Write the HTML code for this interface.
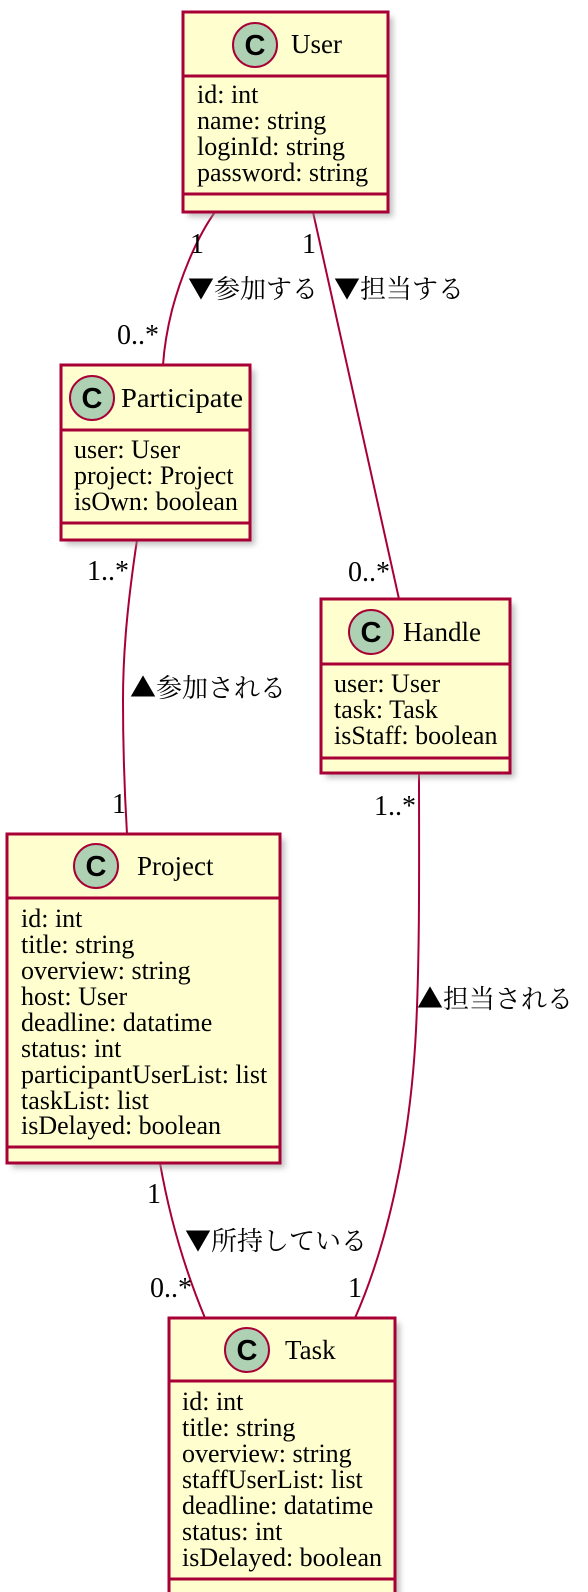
<!DOCTYPE html>
<html><head><meta charset="utf-8"><style>
html,body{margin:0;padding:0;background:#fff;width:588px;height:1592px;overflow:hidden}
svg{display:block}
.t{font-family:"Liberation Serif",serif;font-size:27px;fill:#000}
.a{font-family:"Liberation Serif",serif;font-size:26px;fill:#000}
.j{font-family:"Noto Serif CJK SC","Noto Sans CJK JP",serif;font-size:26px;fill:#000}
.m{font-family:"Liberation Serif",serif;font-size:28px;fill:#000}
.c{font-family:"Liberation Sans",sans-serif;font-weight:bold;font-size:29px;fill:#000}
.box{fill:#FEFECE;stroke:#A80036;stroke-width:3}
.dv{stroke:#A80036;stroke-width:3}
.ci{fill:#ADD1B2;stroke:#A80036;stroke-width:2}
.e{fill:none;stroke:#A80036;stroke-width:2}
</style></head><body>
<svg width="588" height="1592" viewBox="0 0 588 1592" xmlns="http://www.w3.org/2000/svg">
<defs><filter id="sh" x="-10%" y="-10%" width="130%" height="130%"><feGaussianBlur stdDeviation="3"/></filter></defs>

<path class="e" d="M215,212 C195,240 180,280 172,310 C167,330 164,350 163,365"/>
<path class="e" d="M313,212 L399,599"/>
<path class="e" d="M137,540 C128,600 123,650 123,700 C123,760 125,800 127,834"/>
<path class="e" d="M419,773 C419,850 420,950 416,1030 C410,1150 385,1250 355,1318"/>
<path class="e" d="M160,1163 C170,1220 185,1270 205,1318"/>

<text class="m" x="190" y="253">1</text>
<text class="m" x="117" y="344">0..*</text>
<text class="j" x="188" y="298">▼参加する</text>
<text class="m" x="302" y="253">1</text>
<text class="j" x="334" y="298">▼担当する</text>
<text class="m" x="348" y="581">0..*</text>
<text class="m" x="87" y="580">1..*</text>
<text class="j" x="130" y="697">▲参加される</text>
<text class="m" x="112" y="813">1</text>
<text class="m" x="374" y="815">1..*</text>
<text class="j" x="417" y="1008">▲担当される</text>
<text class="m" x="147" y="1203">1</text>
<text class="j" x="185" y="1250">▼所持している</text>
<text class="m" x="150" y="1297">0..*</text>
<text class="m" x="348" y="1297">1</text>

<!-- User -->
<rect x="188" y="17" width="205" height="200" fill="#999" opacity=".6" filter="url(#sh)"/>
<rect class="box" x="183" y="12" width="205" height="200"/>
<line class="dv" x1="183" y1="76" x2="388" y2="76"/>
<line class="dv" x1="183" y1="194" x2="388" y2="194"/>
<circle class="ci" cx="255" cy="45" r="22"/>
<text class="c" x="255" y="55" text-anchor="middle">C</text>
<text class="t" x="291" y="53">User</text>
<text class="a" x="197" y="103">id: int</text>
<text class="a" x="197" y="129">name: string</text>
<text class="a" x="197" y="155">loginId: string</text>
<text class="a" x="197" y="181">password: string</text>

<!-- Participate -->
<rect x="66" y="370" width="189" height="175" fill="#999" opacity=".6" filter="url(#sh)"/>
<rect class="box" x="61" y="365" width="189" height="175"/>
<line class="dv" x1="61" y1="430" x2="250" y2="430"/>
<line class="dv" x1="61" y1="523" x2="250" y2="523"/>
<circle class="ci" cx="92" cy="398" r="22"/>
<text class="c" x="92" y="408" text-anchor="middle">C</text>
<text class="t" x="121" y="407" textLength="122" lengthAdjust="spacingAndGlyphs">Participate</text>
<text class="a" x="74" y="458">user: User</text>
<text class="a" x="74" y="484">project: Project</text>
<text class="a" x="74" y="510">isOwn: boolean</text>

<!-- Handle -->
<rect x="326" y="604" width="189" height="174" fill="#999" opacity=".6" filter="url(#sh)"/>
<rect class="box" x="321" y="599" width="189" height="174"/>
<line class="dv" x1="321" y1="664" x2="510" y2="664"/>
<line class="dv" x1="321" y1="758" x2="510" y2="758"/>
<circle class="ci" cx="371" cy="632" r="22"/>
<text class="c" x="371" y="642" text-anchor="middle">C</text>
<text class="t" x="403" y="641">Handle</text>
<text class="a" x="334" y="692">user: User</text>
<text class="a" x="334" y="718">task: Task</text>
<text class="a" x="334" y="744">isStaff: boolean</text>

<!-- Project -->
<rect x="12" y="839" width="273" height="329" fill="#999" opacity=".6" filter="url(#sh)"/>
<rect class="box" x="7" y="834" width="273" height="329"/>
<line class="dv" x1="7" y1="898" x2="280" y2="898"/>
<line class="dv" x1="7" y1="1147" x2="280" y2="1147"/>
<circle class="ci" cx="96" cy="866" r="22"/>
<text class="c" x="96" y="876" text-anchor="middle">C</text>
<text class="t" x="137" y="875">Project</text>
<text class="a" x="21" y="927">id: int</text>
<text class="a" x="21" y="953">title: string</text>
<text class="a" x="21" y="979">overview: string</text>
<text class="a" x="21" y="1005">host: User</text>
<text class="a" x="21" y="1031">deadline: datatime</text>
<text class="a" x="21" y="1057">status: int</text>
<text class="a" x="21" y="1083">participantUserList: list</text>
<text class="a" x="21" y="1109">taskList: list</text>
<text class="a" x="21" y="1134">isDelayed: boolean</text>

<!-- Task -->
<rect x="174" y="1323" width="226" height="300" fill="#999" opacity=".6" filter="url(#sh)"/>
<rect class="box" x="169" y="1318" width="226" height="300"/>
<line class="dv" x1="169" y1="1381" x2="395" y2="1381"/>
<line class="dv" x1="169" y1="1579" x2="395" y2="1579"/>
<circle class="ci" cx="247" cy="1350" r="22"/>
<text class="c" x="247" y="1360" text-anchor="middle">C</text>
<text class="t" x="285" y="1359">Task</text>
<text class="a" x="182" y="1410">id: int</text>
<text class="a" x="182" y="1436">title: string</text>
<text class="a" x="182" y="1462">overview: string</text>
<text class="a" x="182" y="1488">staffUserList: list</text>
<text class="a" x="182" y="1514">deadline: datatime</text>
<text class="a" x="182" y="1540">status: int</text>
<text class="a" x="182" y="1566">isDelayed: boolean</text>
</svg>
</body></html>
